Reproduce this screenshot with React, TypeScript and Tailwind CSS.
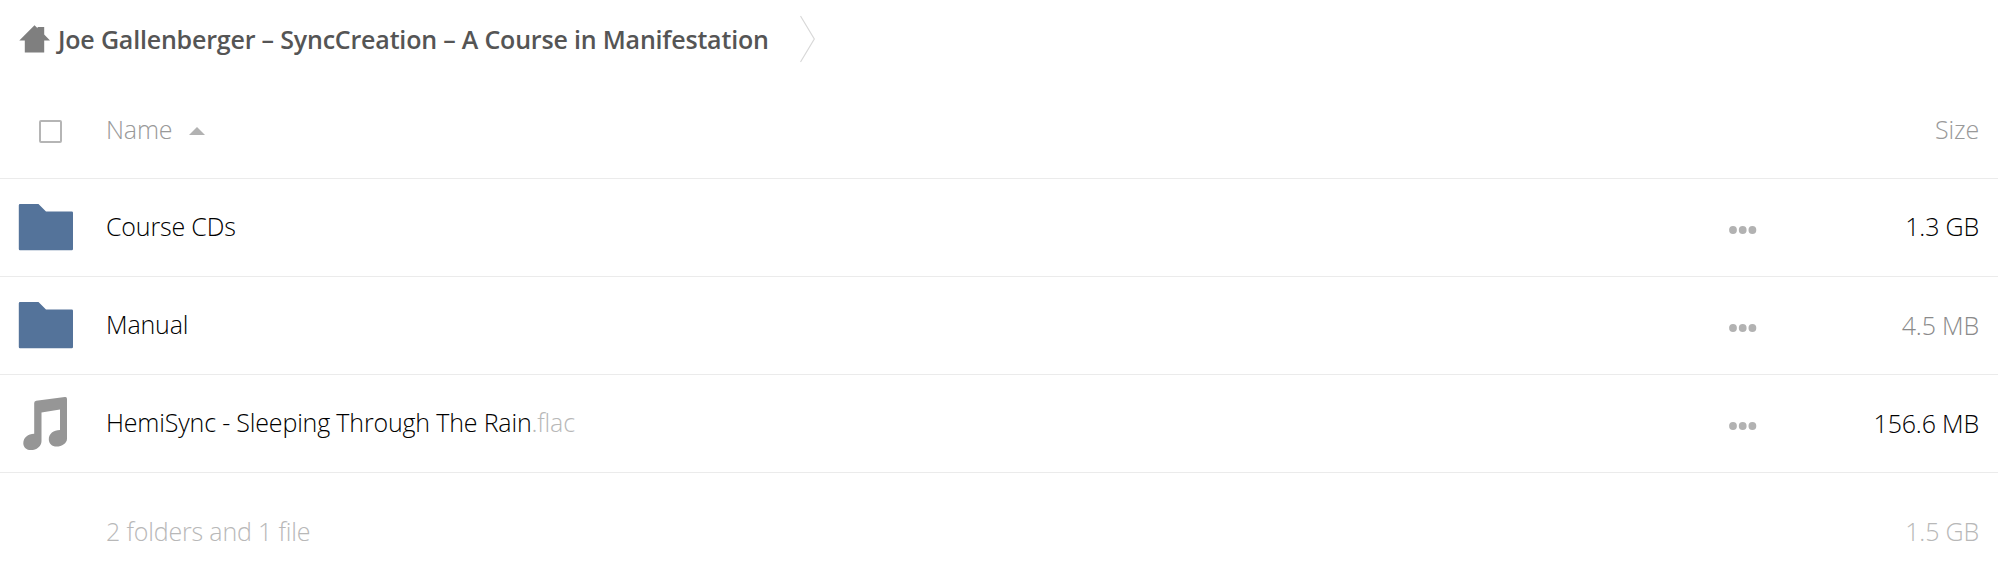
import { useState } from 'react'

const files = [
  { kind: 'folder', name: 'Course CDs', ext: '', size: '1.3 GB', sizeColor: 'text-black pb-[3px]' },
  { kind: 'folder', name: 'Manual', ext: '', size: '4.5 MB', sizeColor: 'text-[#8a8a8a] pb-px' },
  { kind: 'audio', name: 'HemiSync - Sleeping Through The Rain', ext: '.flac', size: '156.6 MB', sizeColor: 'text-black pb-px' },
]

function HomeIcon() {
  return (
    <svg width="32" height="28" viewBox="0 0 32 28" className="shrink-0" fill="#7f7f7f">
      <path d="M15.5 0.2 18.6 3.2V2H25.2V9.6L31 15.4H25.2V27.4H5.8V15.4H0.3Z" />
    </svg>
  )
}

function FolderIcon() {
  return (
    <svg width="56" height="48" viewBox="0 0 56 48" fill="#54739a">
      <path d="M2 0H20.5L28 7.6H53.8A1.2 1.2 0 0 1 55 8.8V45A1.2 1.2 0 0 1 53.8 46.2H2A1.2 1.2 0 0 1 0.8 45V1.2A1.2 1.2 0 0 1 2 0Z" />
    </svg>
  )
}

function MusicIcon() {
  return (
    <svg width="56" height="54" viewBox="0 0 56 54" fill="#969696">
      <path d="M16.2 6Q16.2 4 18.2 3.7L46.8 0Q49 -0.2 49 1.9V41.7C49 46.2 44 49.5 38.5 49.5C34 49.5 30.8 46.7 30.8 42.2C30.8 36.7 35.5 32.9 42 32.9V12.5L23.5 15.5V44.2C23.5 49.2 18.5 53.1 13 53.1C8.5 53.1 5.3 50.2 5.3 46.2C5.3 40.7 10 36.8 16.2 36.8Z" />
    </svg>
  )
}

function MoreIcon() {
  return (
    <svg width="28" height="8" viewBox="0 0 28 8" fill="#b2b2b2">
      <circle cx="4" cy="4" r="3.9" />
      <circle cx="13.7" cy="4" r="3.9" />
      <circle cx="23.4" cy="4" r="3.9" />
    </svg>
  )
}

function FileRow({ file }: { file: typeof files[0] }) {
  return (
    <div className="flex h-[98px] items-center border-b border-[#ebebeb] pr-[19px]">
      <div className="w-[106px] shrink-0 pl-[18px]">
        {file.kind === 'folder' ? <FolderIcon /> : <MusicIcon />}
      </div>
      <div className="flex-1 whitespace-pre pb-[3px]">
        {file.name}
        <span className="text-[#b8b8b8]">{file.ext}</span>
      </div>
      <button className="w-[110px] shrink-0 pt-1" aria-label="More">
        <MoreIcon />
      </button>
      <div className={`w-[140px] shrink-0 text-right ${file.sizeColor}`}>{file.size}</div>
    </div>
  )
}

export default function App() {
  const [checked, setChecked] = useState(false)

  return (
    <div className="h-[580px] w-full bg-white font-['Open_Sans',sans-serif] text-[25px] leading-9 font-light tracking-[-0.17px] text-black">
      {/* Breadcrumb */}
      <nav className="flex h-20 items-center pl-[19px]">
        <div className="flex items-center pb-0.5">
          <HomeIcon />
          <span className="ml-[7px] font-semibold tracking-[-0.19px] whitespace-nowrap text-[#555]">
            Joe Gallenberger – SyncCreation – A Course in Manifestation
          </span>
        </div>
        <svg width="16" height="48" viewBox="0 0 16 48" className="mb-0.5 ml-[31px]" fill="none" stroke="#d8d8d8" strokeWidth="1.2">
          <path d="M0.5 1 14.3 24 0.5 47" />
        </svg>
      </nav>

      {/* Column headers */}
      <div className="flex h-[99px] items-center border-b border-[#ebebeb] pr-[19px] text-[#999]">
        <div className="flex w-[106px] shrink-0 pt-[5px] pl-[39px]">
          <button
            onClick={() => setChecked(!checked)}
            aria-label="Select all"
            className={`size-[23px] rounded-[2px] border-2 border-[#b5b5b5] ${checked ? 'bg-[#b5b5b5]' : ''}`}
          />
        </div>
        <div className="flex flex-1 items-center">
          Name
          <svg width="16" height="8" viewBox="0 0 16 8" className="mt-[3px] ml-[17px]" fill="#b2b2b2">
            <path d="M8 0 16 8H0Z" />
          </svg>
        </div>
        <div>Size</div>
      </div>

      {files.map((file) => (
        <FileRow key={file.name} file={file} />
      ))}

      {/* Summary */}
      <div className="flex h-[107px] items-center justify-between pt-2 pr-[19px] pl-[106px] text-[#b8b8b8]">
        <span>2 folders and 1 file</span>
        <span>1.5 GB</span>
      </div>
    </div>
  )
}
